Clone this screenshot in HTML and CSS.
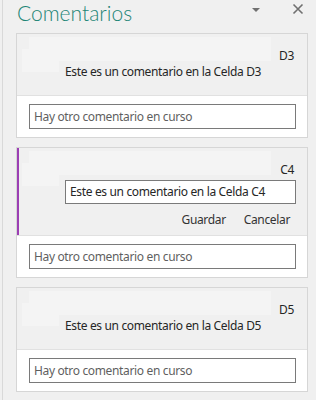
FILE: index.html
```html
<!DOCTYPE html>
<html lang="es">
<head>
    <meta charset="UTF-8">
    <meta name="viewport" content="width=device-width, initial-scale=1.0">
    <title>Comentarios</title>
    <link rel="stylesheet" href="styles.css">
</head>
<body>
    <div class="pane">
        <div class="pane-header">
            <h1 class="pane-title">Comentarios</h1>
            <div class="pane-actions">
                <svg class="icon-menu" width="10" height="6" viewBox="0 0 10 6"><path d="M1 1h8L5 5z" fill="#707070"/></svg>
                <svg class="icon-close" width="12" height="12" viewBox="0 0 12 12"><path d="M1.5 1.5l9 9M10.5 1.5l-9 9" stroke="#707070" stroke-width="1.6" fill="none"/></svg>
            </div>
        </div>

        <!-- Comentario D3 -->
        <div class="card">
            <div class="card-head">
                <div class="shimmer shimmer-name"></div>
                <div class="shimmer shimmer-avatar"></div>
                <div class="cell-ref">D3</div>
                <div class="comment-text">Este es un comentario en la Celda D3</div>
            </div>
            <div class="card-reply">
                <div class="reply-box">Hay otro comentario en curso</div>
            </div>
        </div>

        <!-- Comentario C4 (en edición) -->
        <div class="card active">
            <div class="card-head">
                <div class="shimmer shimmer-name"></div>
                <div class="shimmer shimmer-avatar"></div>
                <div class="cell-ref">C4</div>
                <div class="edit-box">Este es un comentario en la Celda C4</div>
                <div class="edit-actions">
                    <span class="edit-btn">Guardar</span>
                    <span class="edit-btn">Cancelar</span>
                </div>
            </div>
            <div class="card-reply">
                <div class="reply-box">Hay otro comentario en curso</div>
            </div>
        </div>

        <!-- Comentario D5 -->
        <div class="card">
            <div class="card-head">
                <div class="shimmer shimmer-name"></div>
                <div class="shimmer shimmer-avatar"></div>
                <div class="cell-ref">D5</div>
                <div class="comment-text">Este es un comentario en la Celda D5</div>
            </div>
            <div class="card-reply">
                <div class="reply-box">Hay otro comentario en curso</div>
            </div>
        </div>
    </div>
</body>
</html>
```

FILE: styles.css
```css
body {
    margin: 0;
    background-color: #f0f0f0;
    font-family: "Noto Sans", Arial, sans-serif;
    font-size: 12px;
    letter-spacing: -0.35px;
    color: #262626;
}

.pane {
    margin-left: 2px;
    border-left: 1px solid #d9d9d9;
    min-height: 100vh;
    box-sizing: border-box;
}

.pane-header {
    height: 33px;
    display: flex;
    align-items: flex-start;
    justify-content: space-between;
}

.pane-title {
    margin: 0;
    padding-left: 14px;
    font-family: Lato, "Noto Sans", sans-serif;
    font-size: 21px;
    font-weight: 300;
    letter-spacing: 0;
    line-height: 26px;
    color: #1c8576;
}

.pane-actions {
    display: flex;
    align-items: center;
    gap: 31px;
    padding-top: 3px;
    padding-right: 12px;
}

.icon-menu {
    margin-top: 1px;
}

.card {
    margin: 0 8px 9px 13px;
    border: 1px solid #d6d6d6;
}

.card-head {
    position: relative;
    padding: 14px 11px 15px 48px;
    background-color: #f0f0f0;
}

.shimmer {
    position: absolute;
    background-color: #f4f4f4;
}

.shimmer-name {
    left: 12px;
    top: 3px;
    width: 242px;
    height: 24px;
}

.shimmer-avatar {
    left: 5px;
    top: 15px;
    width: 37px;
    height: 23px;
}

.cell-ref {
    position: relative;
    text-align: right;
    padding-right: 2px;
    line-height: 16px;
}

.comment-text {
    position: relative;
    line-height: 16px;
}

.card.active {
    box-shadow: inset 2px 0 0 #9c3fb4;
}

.card.active .card-head {
    padding-bottom: 7px;
    background-color: transparent;
}

.edit-box {
    position: relative;
    margin-top: 2px;
    height: 22px;
    line-height: 22px;
    padding: 0 4px;
    border: 1px solid #7a7a7a;
    background-color: white;
}

.edit-actions {
    display: flex;
    justify-content: flex-end;
    gap: 18px;
    margin-top: 8px;
    padding-right: 6px;
    line-height: 16px;
    color: #333;
}

.card-reply {
    border-top: 1px solid #e1e1e1;
    background-color: white;
    padding: 8px 11px 8px 12px;
}

.reply-box {
    height: 23px;
    line-height: 23px;
    padding: 0 4px;
    border: 1px solid #7a7a7a;
    color: #5f5f5f;
}
```
